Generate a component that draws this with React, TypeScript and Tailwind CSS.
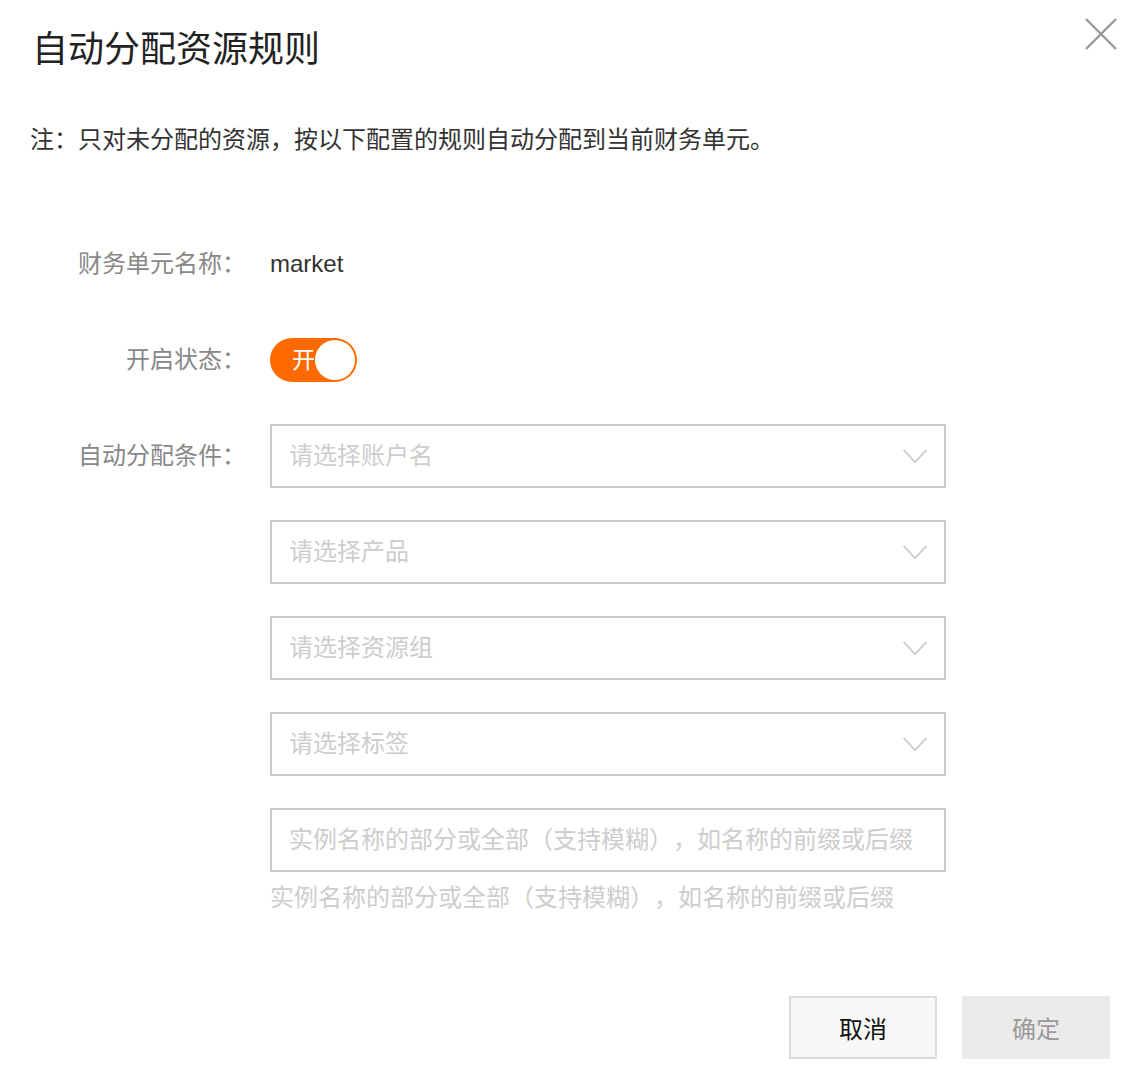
import React from "react";

const font = {
  fontFamily: '"Liberation Sans", "Noto Sans CJK SC", sans-serif',
};

function Chevron() {
  return (
    <svg width="26" height="16" viewBox="0 0 26 16" fill="none">
      <path d="M1.5 2 L13 14 L24.5 2" stroke="#c4c6cc" strokeWidth="1.6" />
    </svg>
  );
}

function Select({ placeholder }: { placeholder: string }) {
  return (
    <div className="flex h-[64px] w-[676px] items-center justify-between border-2 border-[#c8cacf] bg-white pl-[17px] pr-[16px]">
      <span className="text-[24px] leading-[36px] text-[#cdcdcd]">{placeholder}</span>
      <Chevron />
    </div>
  );
}

export default function App() {
  return (
    <div className="relative h-[1070px] w-full bg-white text-[#333] [text-spacing-trim:space-all]" style={font}>
      <button className="absolute right-[14px] top-[17px] flex h-[34px] w-[34px] items-center justify-center">
        <svg width="34" height="34" viewBox="0 0 34 34">
          <path d="M2 2 L32 32 M32 2 L2 32" stroke="#999" strokeWidth="2.4" />
        </svg>
      </button>

      <div className="pl-[32px] pt-[25px]">
        <h1 className="text-[36px] font-normal leading-[50px] text-[#222]">自动分配资源规则</h1>
      </div>

      <p className="mt-[47px] pl-[30px] text-[24px] leading-[36px] text-[#333]">
        注：只对未分配的资源，按以下配置的规则自动分配到当前财务单元。
      </p>

      <div className="mt-[74px] flex flex-col gap-[32px]">
        <div className="flex h-[64px] items-center">
          <div className="w-[246px] text-right text-[24px] leading-[36px] text-[#888]">财务单元名称：</div>
          <div className="ml-[24px] text-[24px] leading-[36px] text-[#333]">market</div>
        </div>

        <div className="flex h-[64px] items-center">
          <div className="w-[246px] text-right text-[24px] leading-[36px] text-[#888]">开启状态：</div>
          <div className="ml-[24px]">
            <div className="flex h-[44px] w-[87px] items-center justify-between rounded-full bg-[#ff6a00] pl-[22px] pr-[2px]">
              <span className="text-[23px] leading-[30px] text-white">开</span>
              <span className="h-[40px] w-[40px] rounded-full bg-white" />
            </div>
          </div>
        </div>

        <div className="flex items-start">
          <div className="flex h-[64px] w-[246px] items-center justify-end text-[24px] leading-[36px] text-[#888]">
            自动分配条件：
          </div>
          <div className="ml-[24px] flex flex-col gap-[32px]">
            <Select placeholder="请选择账户名" />
            <Select placeholder="请选择产品" />
            <Select placeholder="请选择资源组" />
            <Select placeholder="请选择标签" />
            <div className="flex flex-col">
              <div className="flex h-[64px] w-[676px] items-center border-2 border-[#c8cacf] bg-white pl-[17px]">
                <span className="text-[24px] leading-[36px] text-[#cdcdcd]">
                  实例名称的部分或全部（支持模糊），如名称的前缀或后缀
                </span>
              </div>
              <div className="mt-[8px] text-[24px] leading-[36px] text-[#cdcdcd]">
                实例名称的部分或全部（支持模糊），如名称的前缀或后缀
              </div>
            </div>
          </div>
        </div>
      </div>

      <div className="absolute bottom-[11px] right-[22px] flex gap-[25px]">
        <button className="h-[63px] w-[148px] border-2 border-[#dcdcdc] bg-[#f7f7f7] pt-[4px] text-[24px] text-[#111]">
          取消
        </button>
        <button className="h-[63px] w-[148px] bg-[#ebebeb] pt-[4px] text-[24px] text-[#999]">确定</button>
      </div>
    </div>
  );
}
